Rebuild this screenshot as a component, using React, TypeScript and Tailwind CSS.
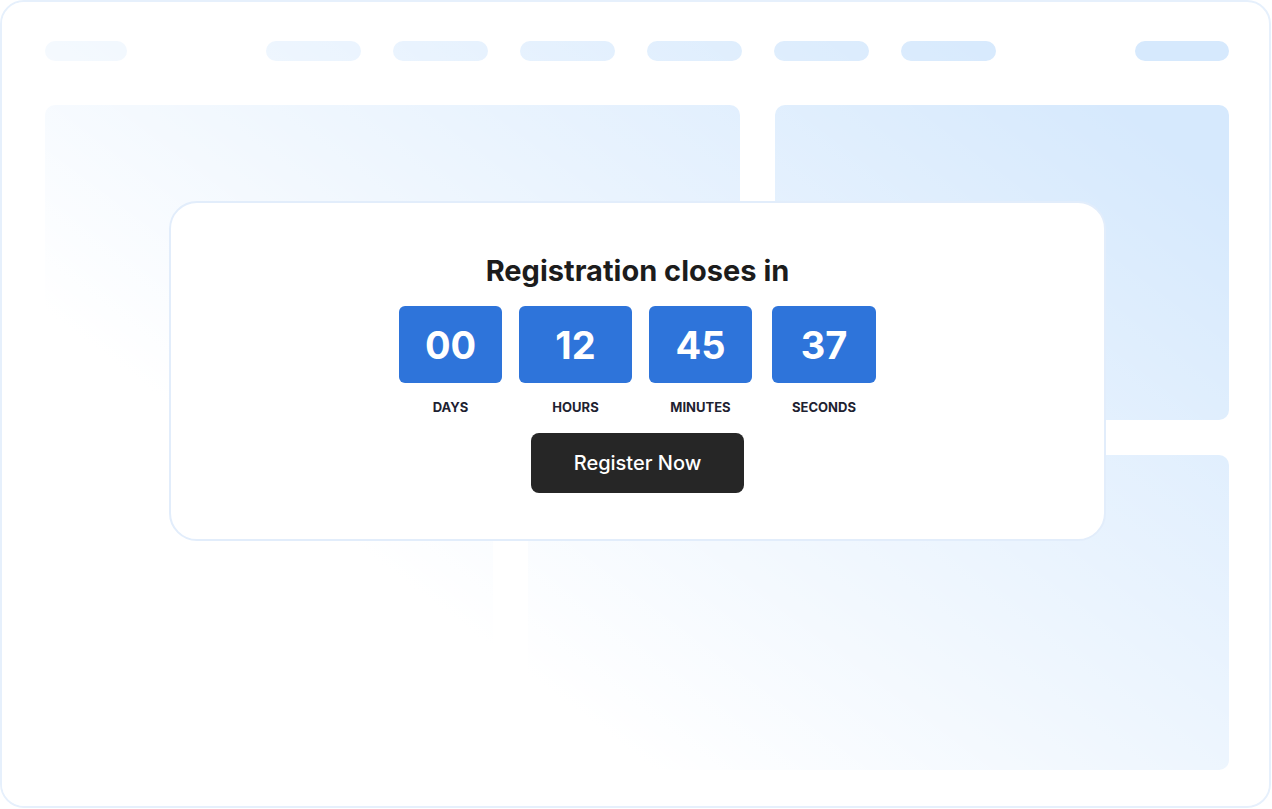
const navPills = ["w-[95px]", "w-[95px]", "w-[95px]", "w-[95px]", "w-[95px]", "w-[95px]"];

const units = [
  { value: "00", label: "DAYS", width: "w-[103px]", extra: "" },
  { value: "12", label: "HOURS", width: "w-[113px]", extra: "" },
  { value: "45", label: "MINUTES", width: "w-[103px]", extra: "" },
  { value: "37", label: "SECONDS", width: "w-[104px]", extra: "ml-[3px]" },
];

function Skeleton() {
  return (
    <div className="flex flex-col h-full">
      <div className="flex items-center h-5">
        <div className="w-[82px] h-5 rounded-full bg-[#d6e9fd]" />
        <div className="flex gap-8 ml-[139px]">
          {navPills.map((w, i) => (
            <div key={i} className={`${w} h-5 rounded-full bg-[#d6e9fd]`} />
          ))}
        </div>
        <div className="w-[94px] h-5 rounded-full bg-[#d6e9fd] ml-auto" />
      </div>

      <div className="grid grid-rows-2 gap-[35px] mt-[44px] flex-1">
        <div className="flex gap-[35px]">
          <div className="w-[695px] rounded-[10px] bg-[#d6e9fd]" />
          <div className="flex-1 rounded-[10px] bg-[#d6e9fd]" />
        </div>
        <div className="flex gap-[35px]">
          <div className="w-[448px] rounded-[10px] bg-[#d6e9fd]" />
          <div className="flex-1 rounded-[10px] bg-[#d6e9fd]" />
        </div>
      </div>
    </div>
  );
}

function Countdown() {
  return (
    <div className="absolute left-[167px] top-[199px] w-[937px] h-[340px] bg-white border-2 border-[#e2edfb] rounded-[28px] flex flex-col items-center pt-[51px]">
      <h1 className="text-[29px] leading-[34px] font-bold text-[#1c1c1c]">
        Registration closes in
      </h1>

      <div className="flex gap-[17px] mt-[18px]">
        {units.map((u) => (
          <div key={u.label} className={`flex flex-col items-center ${u.width} ${u.extra}`}>
            <div className="w-full h-[77px] rounded-[6px] bg-[#2e74da] flex items-center justify-center">
              <span className="text-[38px] leading-none font-bold text-white">{u.value}</span>
            </div>
            <span className="mt-4 text-[13px] leading-4 font-bold text-[#1e2231]">{u.label}</span>
          </div>
        ))}
      </div>

      <button className="mt-[18px] w-[213px] h-[60px] rounded-lg bg-[#262626] text-white text-[20px] font-medium">
        Register Now
      </button>
    </div>
  );
}

export default function App() {
  return (
    <div className="w-[1272px] h-[809px] bg-white" style={{ fontFamily: "Inter, 'Noto Sans', sans-serif" }}>
      <div className="relative w-[1271px] h-[808px] border-2 border-[#e6f0fc] rounded-[24px] overflow-hidden pt-[39px] pb-[36px] pl-[43px] pr-[40px]">
        <Skeleton />
        <div className="absolute inset-0 bg-[linear-gradient(217deg,rgba(255,255,255,0)_12%,#ffffff_70%)]" />
        <Countdown />
      </div>
    </div>
  );
}
